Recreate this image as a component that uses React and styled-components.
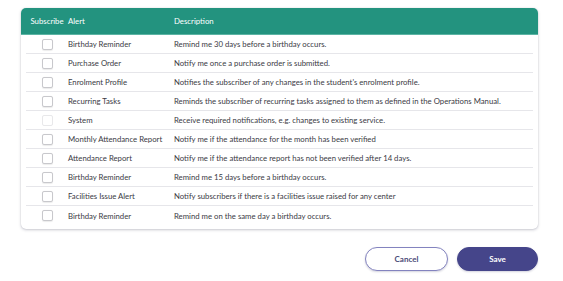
import React from "react";
import styled, { createGlobalStyle } from "styled-components";

const Global = createGlobalStyle`
  html, body { margin: 0; padding: 0; background: #ffffff; }
  body { font-family: Lato, "Open Sans", sans-serif; }
`;

const Page = styled.div`
  width: 563px;
  height: 281px;
  box-sizing: border-box;
  padding: 8px 25px 0 21px;
  display: flex;
  flex-direction: column;
`;

const Card = styled.div`
  width: 517px;
  height: 221px;
  box-sizing: border-box;
  border-radius: 5px;
  background: #fff;
  box-shadow: 0 1px 3px rgba(60, 60, 90, 0.28), 0 0 1px rgba(60, 60, 90, 0.2);
  overflow: hidden;
`;

const Grid = styled.div`
  display: grid;
  grid-template-columns: 42px 106px 1fr;
  align-items: center;
`;

const Header = styled(Grid)`
  height: 27px;
  background: #23937f;
  padding: 0 5px;
  border-bottom: 1px solid #5cb4a4;
  box-sizing: border-box;
  color: #fff;
  font-size: 7.8px;
`;

const HeadCell = styled.div`
  text-align: ${(p) => (p.$center ? "center" : "left")};
`;

const Body = styled.div`
  padding: 0 5px;
`;

const Row = styled(Grid)`
  height: 19px;
  border-bottom: ${(p) => (p.$last ? "none" : "1px solid #e6e6ea")};
  box-sizing: border-box;
  font-size: 7.75px;
  color: #3a3a44;
`;

const CheckCell = styled.div`
  display: flex;
  justify-content: center;
`;

const Box = styled.span`
  width: 9px;
  height: 9px;
  border: 1px solid ${(p) => (p.$disabled ? "#e8e8ea" : "#c8c8cc")};
  border-radius: 2px;
  background: #fff;
  box-shadow: ${(p) => (p.$disabled ? "none" : "0 0.5px 1px rgba(0,0,0,0.08)")};
`;

const Cell = styled.div`
  white-space: nowrap;
`;

const Actions = styled.div`
  display: flex;
  justify-content: flex-end;
  gap: 9px;
  margin-top: 18px;
`;

const Button = styled.button`
  width: ${(p) => (p.$primary ? "81px" : "83px")};
  height: 24px;
  border-radius: 12px;
  font-family: Lato, "Open Sans", sans-serif;
  font-weight: 700;
  font-size: 8px;
  cursor: pointer;
  box-sizing: border-box;
  border: ${(p) => (p.$primary ? "1px solid #45458a" : "1.5px solid #8383bf")};
  background: ${(p) => (p.$primary ? "#45458a" : "#ffffff")};
  color: ${(p) => (p.$primary ? "#ffffff" : "#4a4a78")};
  box-shadow: 0 1px 2px rgba(40, 40, 90, 0.2);
`;

const rows = [
  ["Birthday Reminder", "Remind me 30 days before a birthday occurs."],
  ["Purchase Order", "Notify me once a purchase order is submitted."],
  ["Enrolment Profile", "Notifies the subscriber of any changes in the student's enrolment profile."],
  ["Recurring Tasks", "Reminds the subscriber of recurring tasks assigned to them as defined in the Operations Manual."],
  ["System", "Receive required notifications, e.g. changes to existing service.", true],
  ["Monthly Attendance Report", "Notify me if the attendance for the month has been verified"],
  ["Attendance Report", "Notify me if the attendance report has not been verified after 14 days."],
  ["Birthday Reminder", "Remind me 15 days before a birthday occurs."],
  ["Facilities Issue Alert", "Notify subscribers if there is a facilities issue raised for any center"],
  ["Birthday Reminder", "Remind me on the same day a birthday occurs."],
];

export default function App() {
  return (
    <>
      <Global />
      <Page>
        <Card>
          <Header>
            <HeadCell $center>Subscribe</HeadCell>
            <HeadCell>Alert</HeadCell>
            <HeadCell>Description</HeadCell>
          </Header>
          <Body>
            {rows.map(([a, d, dis], i) => (
              <Row key={i} $last={i === rows.length - 1}>
                <CheckCell>
                  <Box $disabled={dis} />
                </CheckCell>
                <Cell>{a}</Cell>
                <Cell>{d}</Cell>
              </Row>
            ))}
          </Body>
        </Card>
        <Actions>
          <Button>Cancel</Button>
          <Button $primary>Save</Button>
        </Actions>
      </Page>
    </>
  );
}
